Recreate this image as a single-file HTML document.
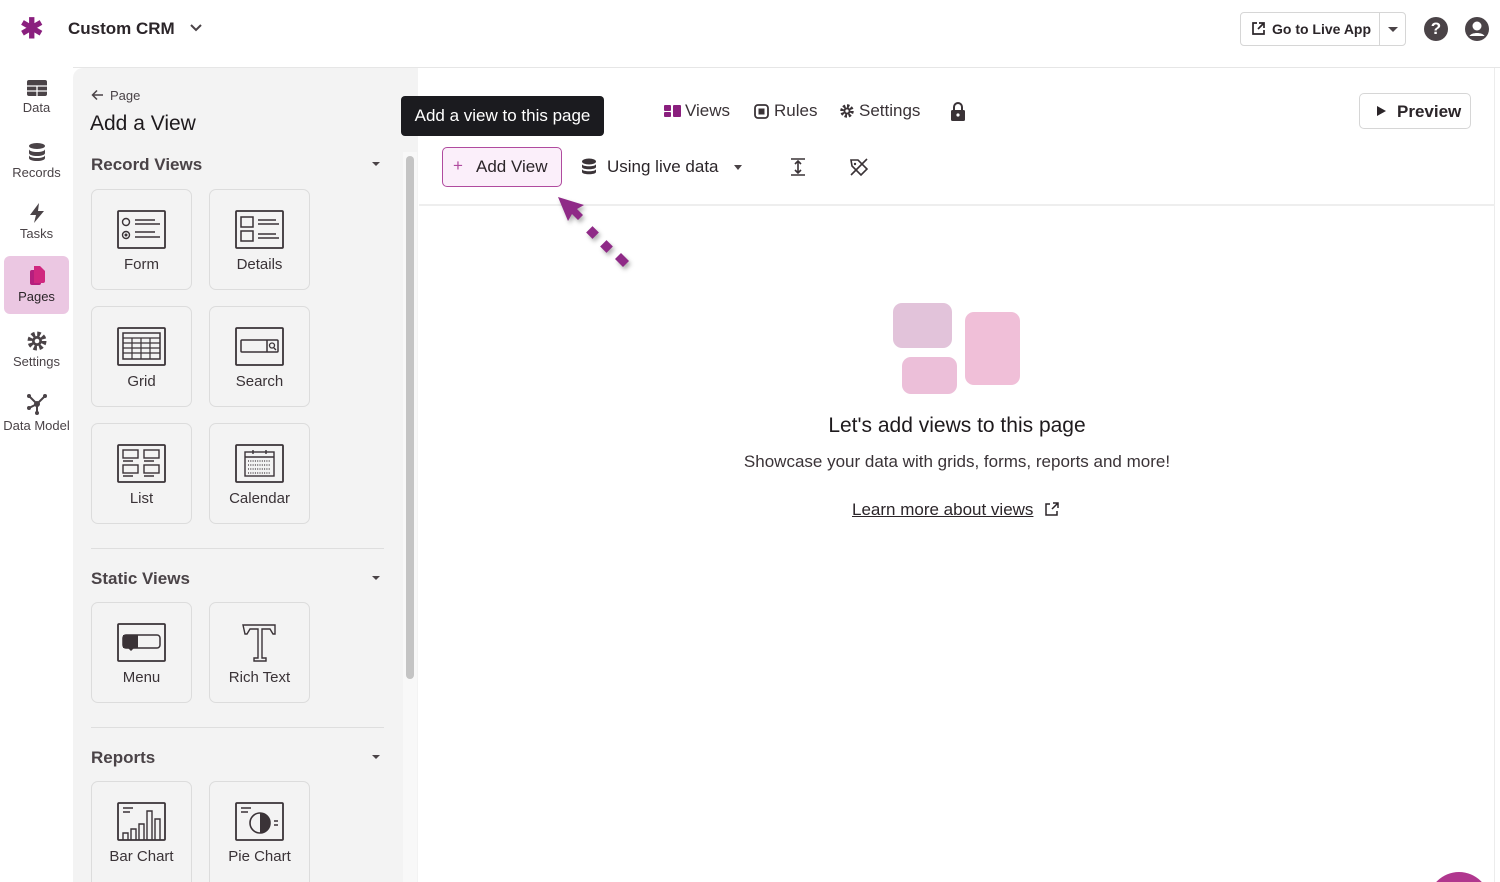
<!DOCTYPE html>
<html><head><style>
*{box-sizing:border-box;margin:0;padding:0}
html,body{width:1500px;height:882px;overflow:hidden}
body{background:#fff;font-family:"Liberation Sans",sans-serif;color:#2b2529;position:relative}
.a{position:absolute}
.nav{left:0;width:73px;text-align:center;font-size:13px;color:#4a4347}
.nav svg{display:block;margin:0 auto 3px}
.card{position:absolute;width:101px;height:101px;border:1.5px solid #dcdcdc;border-radius:7px;background:#f3f3f3;text-align:center;font-size:15px;color:#3a3337}
.card svg{position:absolute;left:25px;top:20px}
.card span{position:absolute;left:0;right:0;top:66px}
.sec{font-size:17px;font-weight:bold;color:#4a4347;left:91px}
.caret{left:372px;width:0;height:0;border-left:4px solid transparent;border-right:4px solid transparent;border-top:4px solid #4a4347}
</style></head><body>
<div class="a" style="left:20px;top:12px;font-size:28px;color:#8a1f7e;font-weight:bold">✱</div>
<div class="a" style="left:68px;top:19px;font-size:17px;font-weight:bold">Custom CRM</div>
<svg class="a" style="left:189px;top:23px" width="14" height="10"><path d="M2 2l5 5 5-5" stroke="#4a4347" stroke-width="2" fill="none"/></svg>
<div class="a" style="left:1240px;top:12px;width:166px;height:34px;border:1px solid #d6d6d6;border-radius:4px"></div>
<div class="a" style="left:1379px;top:13px;width:1px;height:32px;background:#d6d6d6"></div>
<svg class="a" style="left:1251px;top:21px" width="15" height="15"><path d="M6 2H2v11h11V9M8 2h5v5M13 2L7 8" stroke="#2b2529" stroke-width="1.7" fill="none"/></svg>
<div class="a" style="left:1272px;top:21px;font-size:14px;font-weight:bold">Go to Live App</div>
<div class="a caret" style="left:1388px;top:27px;border-width:5px 5px 0"></div>
<div class="a" style="left:1424px;top:17px;width:24px;height:24px;border-radius:50%;background:#4a4347;color:#fff;font-weight:bold;font-size:17px;text-align:center;line-height:24px">?</div>
<svg class="a" style="left:1465px;top:17px" width="24" height="24"><circle cx="12" cy="12" r="12" fill="#4a4347"/><circle cx="12" cy="9" r="4.5" fill="#fff"/><path d="M4.5 19c2-4 13-4 15 0" fill="#fff"/></svg>
<div class="a" style="left:73px;top:67px;width:1427px;height:1px;background:#e6e6e6"></div>
<div class="a nav" style="top:79px"><svg width="22" height="18"><rect x="1" y="1" width="20" height="16" rx="2" fill="#4a4347"/><path d="M1 7h20M1 12h20M11 7v10" stroke="#fff" stroke-width="1.3"/></svg>Data</div>
<div class="a nav" style="top:142px"><svg width="18" height="20"><ellipse cx="9" cy="4" rx="8" ry="3" fill="#4a4347"/><path d="M1 7c0 4 16 4 16 0v4c0 4-16 4-16 0zM1 13c0 4 16 4 16 0v3c0 4-16 4-16 0z" fill="#4a4347"/></svg>Records</div>
<div class="a nav" style="top:203px"><svg width="18" height="20"><path d="M11 0L2 12h6l-2 8 10-12h-6z" fill="#4a4347"/></svg>Tasks</div>
<div class="a" style="left:4px;top:256px;width:65px;height:58px;background:#ebc7e2;border-radius:6px"></div>
<div class="a nav" style="top:266px;color:#2b2529"><svg width="18" height="20"><rect x="2" y="4" width="11" height="15" rx="2" fill="#b51f7e"/><path d="M6 0h6l5 5v10a2 2 0 01-2 2H6z" fill="#d0277f"/></svg>Pages</div>
<div class="a nav" style="top:331px"><svg width="20" height="20"><circle cx="10" cy="10" r="7" fill="none" stroke="#4a4347" stroke-width="5" stroke-dasharray="3.2 2.3"/><circle cx="10" cy="10" r="5" fill="#4a4347"/><circle cx="10" cy="10" r="2.3" fill="#fff"/></svg>Settings</div>
<div class="a nav" style="top:393px"><svg width="22" height="22"><path d="M3 3l8 8 8-8M11 11v9M11 11l-8 4" stroke="#4a4347" stroke-width="2" fill="none"/><circle cx="3" cy="3" r="2" fill="#4a4347"/><circle cx="19" cy="3" r="2" fill="#4a4347"/><circle cx="11" cy="20" r="2" fill="#4a4347"/><circle cx="3" cy="15" r="2" fill="#4a4347"/><circle cx="11" cy="11" r="3" fill="#4a4347"/></svg>Data Model</div>
<div class="a" style="left:73px;top:68px;width:345px;height:814px;background:#f3f3f3;border-top-left-radius:10px"></div>
<div class="a" style="left:403px;top:152px;width:14px;height:730px;background:#f8f8f8"></div>
<div class="a" style="left:406px;top:156px;width:8px;height:523px;background:#c4c4c4;border-radius:4px"></div>
<svg class="a" style="left:91px;top:89px" width="13" height="12"><path d="M12 6H2M6 1.5L1.5 6 6 10.5" stroke="#4a4347" stroke-width="1.5" fill="none"/></svg>
<div class="a" style="left:110px;top:88px;font-size:13px;color:#4a4347">Page</div>
<div class="a" style="left:90px;top:112px;font-size:21px;color:#1e1a1d">Add a View</div>
<div class="a sec" style="top:155px">Record Views</div><div class="a caret" style="top:162px"></div>
<div class="card" style="left:91px;top:189px"><svg width="50" height="40"><rect x="1" y="1" width="47" height="37" rx="1" fill="none" stroke="#3a3337" stroke-width="1.8"/><circle cx="9" cy="12" r="3.5" fill="none" stroke="#3a3337" stroke-width="1.4"/><circle cx="9" cy="25" r="3.5" fill="none" stroke="#3a3337" stroke-width="1.4"/><circle cx="9" cy="25" r="1.5" fill="#3a3337"/><path d="M18 10h20M18 14h25M18 22h20M18 27h25" stroke="#3a3337" stroke-width="1.5"/></svg><span>Form</span></div>
<div class="card" style="left:209px;top:189px"><svg width="50" height="40"><rect x="1" y="1" width="47" height="37" rx="1" fill="none" stroke="#3a3337" stroke-width="1.8"/><rect x="6" y="7" width="12" height="10" fill="none" stroke="#3a3337" stroke-width="1.5"/><rect x="6" y="21" width="12" height="10" fill="none" stroke="#3a3337" stroke-width="1.5"/><path d="M23 10h18M23 14h21M23 24h18M23 28h21" stroke="#3a3337" stroke-width="1.5"/></svg><span>Details</span></div>
<div class="card" style="left:91px;top:306px"><svg width="50" height="40"><rect x="1" y="1" width="47" height="37" rx="1" fill="none" stroke="#3a3337" stroke-width="1.8"/><rect x="6" y="6" width="37" height="26" fill="none" stroke="#3a3337" stroke-width="1.5"/><path d="M6 11h37M6 16h37M6 21h37M6 26h37M15 11v21M24 11v21M33 11v21" stroke="#3a3337" stroke-width="1.2"/></svg><span>Grid</span></div>
<div class="card" style="left:209px;top:306px"><svg width="50" height="40"><rect x="1" y="1" width="47" height="37" rx="1" fill="none" stroke="#3a3337" stroke-width="1.8"/><rect x="6" y="13" width="37" height="12" rx="1" fill="none" stroke="#3a3337" stroke-width="1.5"/><path d="M32 13v12" stroke="#3a3337" stroke-width="1.5"/><circle cx="37" cy="18.5" r="2.5" fill="none" stroke="#3a3337" stroke-width="1.3"/><path d="M39 21l2 2" stroke="#3a3337" stroke-width="1.3"/></svg><span>Search</span></div>
<div class="card" style="left:91px;top:423px"><svg width="50" height="40"><rect x="1" y="1" width="47" height="37" rx="1" fill="none" stroke="#3a3337" stroke-width="1.8"/><rect x="6" y="6" width="15" height="8" fill="none" stroke="#3a3337" stroke-width="1.4"/><rect x="27" y="6" width="15" height="8" fill="none" stroke="#3a3337" stroke-width="1.4"/><rect x="6" y="21" width="15" height="8" fill="none" stroke="#3a3337" stroke-width="1.4"/><rect x="27" y="21" width="15" height="8" fill="none" stroke="#3a3337" stroke-width="1.4"/><path d="M6 17h10M27 17h10M6 32h10M27 32h10" stroke="#3a3337" stroke-width="1.4"/></svg><span>List</span></div>
<div class="card" style="left:209px;top:423px"><svg width="50" height="40"><rect x="1" y="1" width="47" height="37" rx="1" fill="none" stroke="#3a3337" stroke-width="1.8"/><rect x="10" y="8" width="29" height="24" fill="none" stroke="#3a3337" stroke-width="1.4"/><path d="M10 13h29M18 6v4M31 6v4" stroke="#3a3337" stroke-width="1.4"/><path d="M13 17h23M13 21h23M13 25h23M13 29h23" stroke="#3a3337" stroke-width="1.3" stroke-dasharray="1 1.3"/></svg><span>Calendar</span></div>
<div class="a" style="left:91px;top:548px;width:293px;height:1px;background:#dedede"></div>
<div class="a sec" style="top:569px">Static Views</div><div class="a caret" style="top:576px"></div>
<div class="card" style="left:91px;top:602px"><svg width="50" height="40"><rect x="1" y="1" width="47" height="37" rx="1" fill="none" stroke="#3a3337" stroke-width="1.8"/><rect x="6" y="12" width="37" height="13" rx="3" fill="none" stroke="#3a3337" stroke-width="1.5"/><path d="M6 12h15v13H6z M11 25l3 3 3-3" fill="#3a3337"/></svg><span>Menu</span></div>
<div class="card" style="left:209px;top:602px"><svg width="50" height="40"><path d="M8 2h32v9h-2l-3-5h-8v29h4v3H19v-3h4V6h-8l-3 5h-2z" fill="none" stroke="#3a3337" stroke-width="1.4"/></svg><span>Rich Text</span></div>
<div class="a" style="left:91px;top:727px;width:293px;height:1px;background:#dedede"></div>
<div class="a sec" style="top:748px">Reports</div><div class="a caret" style="top:755px"></div>
<div class="card" style="left:91px;top:781px;height:101px;border-bottom:none;border-radius:7px 7px 0 0"><svg width="50" height="40"><rect x="1" y="1" width="47" height="37" rx="1" fill="none" stroke="#3a3337" stroke-width="1.8"/><path d="M6 6h10M6 10h7" stroke="#3a3337" stroke-width="1.4"/><path d="M6 38V31h5v7M14 38V27h5v11M22 38V22h5v16M30 38V9h5v29M38 38V17h5v21" fill="none" stroke="#3a3337" stroke-width="1.4"/></svg><span>Bar Chart</span></div>
<div class="card" style="left:209px;top:781px;height:101px;border-bottom:none;border-radius:7px 7px 0 0"><svg width="50" height="40"><rect x="1" y="1" width="47" height="37" rx="1" fill="none" stroke="#3a3337" stroke-width="1.8"/><path d="M6 6h10M6 10h7" stroke="#3a3337" stroke-width="1.4"/><circle cx="25" cy="21" r="10" fill="none" stroke="#3a3337" stroke-width="1.6"/><path d="M25 21V11a10 10 0 0 1 0 20z" fill="#3a3337"/><path d="M39 19h4M39 23h4" stroke="#3a3337" stroke-width="1.4"/></svg><span>Pie Chart</span></div>
<div class="a" style="left:1494px;top:68px;width:1px;height:814px;background:#ececec"></div>
<div class="a" style="left:401px;top:96px;width:203px;height:40px;background:#1b1b1f;border-radius:4px;color:#fff;font-size:17px;line-height:40px;text-align:center">Add a view to this page</div>
<svg class="a" style="left:664px;top:104px" width="17" height="14"><rect x="0" y="1" width="7" height="6" rx="1" fill="#8a1f7e"/><rect x="0" y="8" width="7" height="5" rx="1" fill="#8a1f7e"/><rect x="9" y="1" width="8" height="12" rx="1" fill="#8a1f7e"/></svg>
<div class="a" style="left:685px;top:101px;font-size:17px;color:#3a3337">Views</div>
<svg class="a" style="left:754px;top:104px" width="15" height="15"><rect x="1" y="1" width="13" height="13" rx="3" fill="none" stroke="#3a3337" stroke-width="1.8"/><rect x="4.5" y="4.5" width="6" height="6" fill="#3a3337"/></svg>
<div class="a" style="left:774px;top:101px;font-size:17px;color:#3a3337">Rules</div>
<svg class="a" style="left:840px;top:104px" width="14" height="14"><circle cx="7" cy="7" r="5" fill="none" stroke="#3a3337" stroke-width="3.5" stroke-dasharray="2.3 1.6"/><circle cx="7" cy="7" r="3.5" fill="#3a3337"/><circle cx="7" cy="7" r="1.6" fill="#fff"/></svg>
<div class="a" style="left:859px;top:101px;font-size:17px;color:#3a3337">Settings</div>
<svg class="a" style="left:950px;top:101px" width="16" height="20"><path d="M4 9V6a4 4 0 018 0v3" fill="none" stroke="#3a3337" stroke-width="2"/><rect x="1" y="9" width="14" height="11" rx="1.5" fill="#3a3337"/><circle cx="8" cy="14" r="1.6" fill="#fff"/></svg>
<div class="a" style="left:1359px;top:93px;width:112px;height:36px;border:1px solid #d6d6d6;border-radius:5px"></div>
<div class="a" style="left:1377px;top:106px;border-left:9px solid #2b2529;border-top:5px solid transparent;border-bottom:5px solid transparent"></div>
<div class="a" style="left:1397px;top:102px;font-size:17px;font-weight:bold;color:#2b2529">Preview</div>
<div class="a" style="left:442px;top:147px;width:120px;height:40px;border:1.5px solid #b04b9f;border-radius:5px;background:#fbeffa"></div>
<div class="a" style="left:453px;top:156px;font-size:17px;color:#b04b9f">+</div>
<div class="a" style="left:476px;top:157px;font-size:17px;color:#2b2529">Add View</div>
<svg class="a" style="left:581px;top:158px" width="16" height="18"><ellipse cx="8" cy="3.5" rx="7" ry="3" fill="#3a3337"/><path d="M1 6c0 3 14 3 14 0v3c0 3-14 3-14 0zM1 11c0 3 14 3 14 0v3c0 3-14 3-14 0z" fill="#3a3337"/></svg>
<div class="a" style="left:607px;top:157px;font-size:17px;color:#2b2529">Using live data</div>
<div class="a caret" style="left:734px;top:165px;border-width:5px 4px 0"></div>
<svg class="a" style="left:790px;top:157px" width="16" height="20"><path d="M1 2h14M1 18h14M8 4v12M5 7l3-3 3 3M5 13l3 3 3-3" stroke="#3a3337" stroke-width="1.6" fill="none"/></svg>
<svg class="a" style="left:849px;top:157px" width="20" height="20"><path d="M2 3h7l9 9-6 6-9-9z" fill="none" stroke="#3a3337" stroke-width="1.6"/><circle cx="6" cy="7" r="1.2" fill="#3a3337"/><path d="M2 18L18 2" stroke="#3a3337" stroke-width="1.6"/></svg>
<div class="a" style="left:419px;top:204px;width:1076px;height:2px;background:#eeeeee"></div>
<svg class="a" style="left:555px;top:195px" width="80" height="85"><g fill="#8f2a87" style="filter:drop-shadow(2px 3px 2px rgba(0,0,0,.3))"><path d="M3 2l26 8-7 4 6 6-5 5-6-6-4 7z"/><rect x="33" y="33" width="9" height="9" transform="rotate(45 37.5 37.5)"/><rect x="47" y="47" width="9" height="9" transform="rotate(45 51.5 51.5)"/><path d="M60 64l6-6 8 8-6 6z"/></g></svg>
<div class="a" style="left:893px;top:303px;width:59px;height:45px;border-radius:9px;background:#e2c3da"></div>
<div class="a" style="left:902px;top:357px;width:55px;height:37px;border-radius:9px;background:#ecbfd9"></div>
<div class="a" style="left:965px;top:312px;width:55px;height:73px;border-radius:9px;background:#f0bfd8"></div>
<div class="a" style="left:419px;width:1076px;top:414px;text-align:center;font-size:21px;color:#1e1a1d">Let's add views to this page</div>
<div class="a" style="left:419px;width:1076px;top:452px;text-align:center;font-size:17px;color:#3a3337">Showcase your data with grids, forms, reports and more!</div>
<div class="a" style="left:852px;top:500px;font-size:17px;color:#2b2529;text-decoration:underline">Learn more about views</div>
<svg class="a" style="left:1045px;top:502px" width="14" height="14"><path d="M5 2H1v11h11V9M8 1h5v5M13 1L7 7" stroke="#2b2529" stroke-width="1.5" fill="none"/></svg>
<svg class="a" style="left:1428px;top:872px" width="62" height="10"><circle cx="31" cy="31" r="31" fill="#b0378e"/></svg>
</body></html>
